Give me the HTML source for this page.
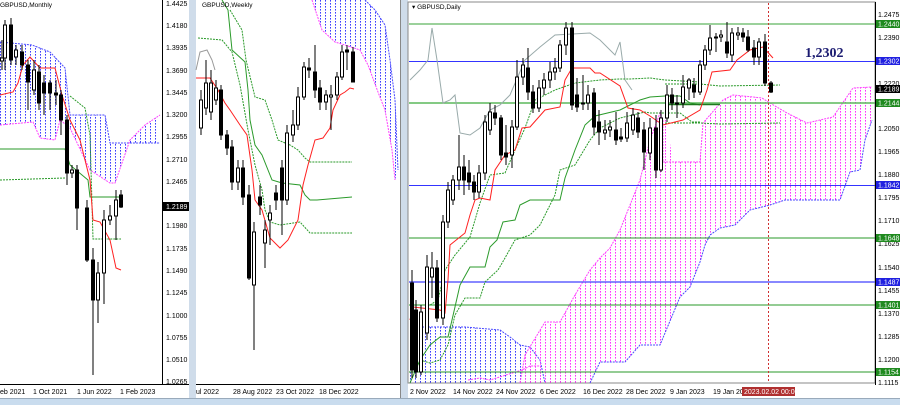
<!DOCTYPE html>
<html><head><meta charset="utf-8"><style>
html,body{margin:0;padding:0;background:#fff;width:900px;height:405px;overflow:hidden}
svg text{font-family:"Liberation Sans",sans-serif;font-size:7px;fill:#000}
</style></head><body>
<svg width="900" height="405" viewBox="0 0 900 405" xmlns="http://www.w3.org/2000/svg">
<defs>
<pattern id="pb" width="5" height="3" patternUnits="userSpaceOnUse"><rect x="0" y="0" width="1" height="1.6" fill="#3a3aff"/></pattern>
<pattern id="pp" width="5" height="3" patternUnits="userSpaceOnUse"><rect x="0" y="0" width="1" height="1.6" fill="#ff30ff"/></pattern>
</defs>
<rect width="900" height="405" fill="#fff"/>
<rect x="189" y="0" width="7" height="398" fill="#cfdcea"/>
<rect x="400" y="0" width="8" height="398" fill="#cfdcea"/>
<line x1="400.5" y1="0" x2="400.5" y2="398" stroke="#888"/>
<rect x="0" y="398" width="900" height="7" fill="#c9dcee"/>
<line x1="0" y1="398.5" x2="900" y2="398.5" stroke="#9ab"/>

<!-- MONTHLY -->
<polygon fill="url(#pb)" points="0,42 32,45 50,52 65,68 70,115 105,115 110,143 160,143 160,115 145,125 130,140 115,183 110,183 90,170 70,128 60,120 55,140 40,138 33,122 0,125"/>
<polyline fill="none" stroke="#4a4aff" stroke-dasharray="2,1" points="0,42 32,45 50,52 65,68 70,115 105,115 110,143 160,143"/>
<polyline fill="none" stroke="#ff40ff" stroke-dasharray="2,1" points="0,125 33,122 40,138 55,140 60,120 70,128 90,170 110,183 115,183 130,140 145,125 160,115"/>
<polyline fill="none" stroke="#2a9a2a" points="0,149 65,149 70,165 88,180 90,197 121,197"/>
<polyline fill="none" stroke="#2a9a2a" stroke-dasharray="2,1" points="0,180 65,178"/>
<polyline fill="none" stroke="#2a9a2a" stroke-dasharray="2,1" points="70,96 85,108 90,135 93,239 121,239"/>
<polyline fill="none" stroke="#ff2020" points="0,95 13,92 18,83 23,65 30,57 40,68 55,68 62,95 70,120 80,140 90,180 93,220 100,222 110,240 116,268 121,270"/>
<g stroke="#000" stroke-width="1">
<line x1="2" y1="40" x2="2" y2="70"/><rect x="0.5" y="58" width="3" height="3" fill="#fff"/>
<line x1="5" y1="20" x2="5" y2="70"/><rect x="3.5" y="25" width="3" height="33" fill="#fff"/>
<line x1="11" y1="18" x2="11" y2="65"/><rect x="9.5" y="25" width="3" height="35" fill="#000"/>
<line x1="16" y1="45" x2="16" y2="65"/><rect x="14.5" y="50" width="3" height="7" fill="#fff"/>
<line x1="22" y1="45" x2="22" y2="70"/><rect x="20.5" y="52" width="3" height="13" fill="#000"/>
<line x1="28" y1="60" x2="28" y2="110"/><rect x="26.5" y="65" width="3" height="17" fill="#000"/>
<line x1="34" y1="60" x2="34" y2="95"/><rect x="32.5" y="70" width="3" height="20" fill="#fff"/>
<line x1="39" y1="65" x2="39" y2="110"/><rect x="37.5" y="72" width="3" height="31" fill="#000"/>
<line x1="44" y1="75" x2="44" y2="115"/><rect x="42.5" y="83" width="3" height="10" fill="#000"/>
<line x1="50" y1="80" x2="50" y2="110"/><rect x="48.5" y="83" width="3" height="10" fill="#000"/>
<line x1="56" y1="80" x2="56" y2="105"/><rect x="54.5" y="93" width="3" height="2" fill="#000"/>
<line x1="61" y1="90" x2="61" y2="135"/><rect x="59.5" y="95" width="3" height="25" fill="#000"/>
<line x1="67" y1="115" x2="67" y2="185"/><rect x="65.5" y="120" width="3" height="53" fill="#000"/>
<line x1="72" y1="165" x2="72" y2="178"/><rect x="70.5" y="170" width="3" height="3" fill="#fff"/>
<line x1="77" y1="165" x2="77" y2="230"/><rect x="75.5" y="170" width="3" height="38" fill="#000"/>
<line x1="87" y1="200" x2="87" y2="262"/><rect x="85.5" y="208" width="3" height="52" fill="#000"/>
<line x1="93" y1="248" x2="93" y2="375"/><rect x="91.5" y="260" width="3" height="40" fill="#000"/>
<line x1="98" y1="262" x2="98" y2="323"/><rect x="96.5" y="273" width="3" height="27" fill="#fff"/>
<line x1="104" y1="210" x2="104" y2="304"/><rect x="102.5" y="220" width="3" height="53" fill="#fff"/>
<line x1="110" y1="205" x2="110" y2="225"/><rect x="108.5" y="216" width="3" height="4" fill="#fff"/>
<line x1="116" y1="190" x2="116" y2="240"/><rect x="114.5" y="200" width="3" height="16" fill="#fff"/>
<line x1="121" y1="190" x2="121" y2="208"/><rect x="119.5" y="195" width="3" height="12" fill="#000"/>
</g>
<line x1="162.5" y1="0" x2="162.5" y2="385" stroke="#000"/>
<line x1="0" y1="384.5" x2="189" y2="384.5" stroke="#000"/>
<g>
<text x="166" y="6">1.4425</text><text x="166" y="28">1.4180</text><text x="166" y="50">1.3935</text><text x="166" y="73">1.3690</text><text x="166" y="95">1.3445</text><text x="166" y="117">1.3200</text><text x="166" y="139">1.2955</text><text x="166" y="162">1.2710</text><text x="166" y="184">1.2465</text>
<text x="166" y="228">1.1980</text><text x="166" y="251">1.1735</text><text x="166" y="273">1.1490</text><text x="166" y="295">1.1245</text><text x="166" y="318">1.1000</text><text x="166" y="340">1.0755</text><text x="166" y="362">1.0510</text><text x="166" y="384">1.0265</text>
</g>
<rect x="163" y="202" width="26" height="9" fill="#000"/><text x="166" y="209" style="fill:#fff">1.2189</text>
<text x="0" y="4" style="font-size:6.5px" dy="3">GBPUSD,Monthly</text>
<text x="0" y="394">eb 2021</text><text x="33" y="394">1 Oct 2021</text><text x="77" y="394">1 Jun 2022</text><text x="120" y="394">1 Feb 2023</text>

<!-- WEEKLY -->
<polygon fill="url(#pb)" points="312,0 322,30 335,42 345,45 360,50 368,65 378,92 385,110 392,150 395,180 398,170 395,100 390,60 385,25 375,10 365,0"/>
<polyline fill="none" stroke="#ff40ff" stroke-dasharray="2,1" points="312,0 322,30 335,42 345,45 360,50 368,65 378,92 385,110 392,150 395,180"/>
<polyline fill="none" stroke="#4a4aff" stroke-dasharray="2,1" points="365,0 375,10 385,25 390,60 395,100 398,170"/>
<polyline fill="none" stroke="#999" points="196,70 200,52 207,50 212,60 215,70"/>
<polyline fill="none" stroke="#2a9a2a" points="222,0 228,10 232,50 245,62 248,90 250,120 255,145 262,155 272,180 282,183 300,185 305,195 310,200 317,200 352,197"/>
<polyline fill="none" stroke="#2a9a2a" stroke-dasharray="2,1" points="230,10 242,30 246,60 255,97 265,100 272,120 278,140 290,145 298,150 305,158 310,162 352,162"/>
<polyline fill="none" stroke="#2a9a2a" stroke-dasharray="2,1" points="198,38 222,40 232,52 240,85 248,130 255,165 262,190 265,210 270,222 280,225 300,222 310,233 352,233"/>
<polyline fill="none" stroke="#ff2020" points="196,78 210,78 218,90 225,103 230,110 240,125 247,135 252,170 255,200 262,210 270,238 280,248 288,240 298,220 303,185 308,165 315,140 323,138 330,128 333,110 340,95 345,92 350,88 354,89"/>
<g stroke="#000">
<line x1="201" y1="90" x2="201" y2="135"/><rect x="199.5" y="100" width="3" height="28" fill="#fff"/>
<line x1="206" y1="60" x2="206" y2="115"/><rect x="204.5" y="83" width="3" height="25" fill="#fff"/>
<line x1="211" y1="70" x2="211" y2="120"/><rect x="209.5" y="83" width="3" height="29" fill="#fff"/>
<line x1="216" y1="80" x2="216" y2="105"/><rect x="214.5" y="88" width="3" height="12" fill="#fff"/>
<line x1="221" y1="85" x2="221" y2="140"/><rect x="219.5" y="90" width="3" height="45" fill="#000"/>
<line x1="227" y1="130" x2="227" y2="155"/><rect x="225.5" y="135" width="3" height="13" fill="#000"/>
<line x1="232" y1="140" x2="232" y2="190"/><rect x="230.5" y="147" width="3" height="35" fill="#000"/>
<line x1="238" y1="160" x2="238" y2="190"/><rect x="236.5" y="168" width="3" height="14" fill="#fff"/>
<line x1="243" y1="160" x2="243" y2="205"/><rect x="241.5" y="168" width="3" height="29" fill="#000"/>
<line x1="249" y1="185" x2="249" y2="280"/><rect x="247.5" y="195" width="3" height="83" fill="#000"/>
<line x1="254" y1="222" x2="254" y2="350"/><rect x="252.5" y="232" width="3" height="53" fill="#fff"/>
<line x1="260" y1="185" x2="260" y2="215"/><rect x="258.5" y="197" width="3" height="8" fill="#000"/>
<line x1="265" y1="220" x2="265" y2="268"/><rect x="263.5" y="230" width="3" height="13" fill="#fff"/>
<line x1="270" y1="205" x2="270" y2="245"/><rect x="268.5" y="213" width="3" height="7" fill="#fff"/>
<line x1="276" y1="185" x2="276" y2="210"/><rect x="274.5" y="193" width="3" height="7" fill="#000"/>
<line x1="282" y1="160" x2="282" y2="235"/><rect x="280.5" y="168" width="3" height="32" fill="#000"/>
<line x1="287" y1="125" x2="287" y2="205"/><rect x="285.5" y="133" width="3" height="67" fill="#fff"/>
<line x1="293" y1="110" x2="293" y2="142"/><rect x="291.5" y="125" width="3" height="10" fill="#fff"/>
<line x1="298" y1="87" x2="298" y2="130"/><rect x="296.5" y="97" width="3" height="28" fill="#fff"/>
<line x1="304" y1="62" x2="304" y2="100"/><rect x="302.5" y="67" width="3" height="30" fill="#fff"/>
<line x1="309" y1="58" x2="309" y2="78"/><rect x="307.5" y="68" width="3" height="2" fill="#000"/>
<line x1="315" y1="45" x2="315" y2="98"/><rect x="313.5" y="72" width="3" height="18" fill="#000"/>
<line x1="320" y1="80" x2="320" y2="110"/><rect x="318.5" y="88" width="3" height="14" fill="#000"/>
<line x1="326" y1="90" x2="326" y2="110"/><rect x="324.5" y="95" width="3" height="7" fill="#fff"/>
<line x1="331" y1="85" x2="331" y2="130"/><rect x="329.5" y="95" width="3" height="2" fill="#fff"/>
<line x1="337" y1="72" x2="337" y2="100"/><rect x="335.5" y="77" width="3" height="18" fill="#fff"/>
<line x1="342" y1="45" x2="342" y2="80"/><rect x="340.5" y="52" width="3" height="25" fill="#fff"/>
<line x1="347" y1="45" x2="347" y2="70"/><rect x="345.5" y="50" width="3" height="2" fill="#000"/>
<line x1="353" y1="47" x2="353" y2="82"/><rect x="351.5" y="52" width="3" height="30" fill="#000"/>
</g>
<line x1="196" y1="384.5" x2="400" y2="384.5" stroke="#000"/>
<text x="202" y="7" style="font-size:6.5px">GBPUSD,Weekly</text>
<text x="196" y="394">ul 2022</text><text x="233" y="394">28 Aug 2022</text><text x="276" y="394">23 Oct 2022</text><text x="319" y="394">18 Dec 2022</text>

<!-- DAILY -->
<rect x="408" y="2" width="467" height="381" fill="#fff" stroke="#888"/>
<polygon fill="url(#pb)" points="410,327 465,327 500,330 510,337 520,345 530,347 540,360 545,383 410,383"/>
<polyline fill="none" stroke="#4a4aff" stroke-dasharray="2,1" points="410,327 465,327 500,330 510,337 520,345 530,347 540,360 545,383"/>
<polyline fill="none" stroke="#ff40ff" stroke-dasharray="2,1" points="468,380 480,378 490,380 522,370 530,366 540,366"/>
<polygon fill="url(#pp)" points="520,383 525,355 545,322 560,322 575,295 590,270 600,258 610,248 620,230 630,205 640,180 650,140 660,113 663,100 673,162 700,162 703,123 723,100 733,95 753,97 762,98 770,103 787,113 807,123 833,117 853,88 872,87 872,120 865,140 860,170 850,172 840,200 785,200 770,205 750,210 735,225 720,228 710,235 705,245 700,262 690,287 680,297 660,345 640,345 625,362 600,362 590,383"/>
<polyline fill="none" stroke="#ff40ff" stroke-dasharray="2,1" points="520,383 525,355 545,322 560,322 575,295 590,270 600,258 610,248 620,230 630,205 640,180 650,140 660,113 663,120 663,162 673,162 700,162 703,123 723,100 733,95 753,97 762,98 770,103 787,113 807,123 833,117 853,88 872,87"/>
<polyline fill="none" stroke="#4a4aff" stroke-dasharray="2,1" points="590,383 600,362 625,362 640,345 660,345 680,297 690,287 700,262 705,245 710,235 720,228 735,225 750,210 770,205 785,200 840,200 850,172 860,170 865,140 872,120"/>
<g stroke-width="1.5">
<line x1="409" y1="24" x2="875" y2="24" stroke="#7ac27a"/>
<line x1="409" y1="61.5" x2="875" y2="61.5" stroke="#3434ff" stroke-width="1"/>
<line x1="409" y1="103" x2="875" y2="103" stroke="#5cb85c"/>
<line x1="409" y1="185.5" x2="875" y2="185.5" stroke="#3434ff" stroke-width="1"/>
<line x1="409" y1="238" x2="875" y2="238" stroke="#2a9a2a" stroke-width="1"/>
<line x1="409" y1="282" x2="875" y2="282" stroke="#6060ff"/>
<line x1="409" y1="305" x2="875" y2="305" stroke="#2a9a2a" stroke-width="1"/>
<line x1="409" y1="372" x2="875" y2="372" stroke="#2a9a2a" stroke-width="1"/>
</g>
<polyline fill="none" stroke="#9aa" points="410,80 420,70 428,60 432,28 437,60 443,103 450,100 455,95 460,133 470,135 480,128 490,110 500,105 510,95 525,60 540,47 555,35 590,33 600,40 615,55 620,42 625,80 632,90"/>
<polyline fill="none" stroke="#2a9a2a" points="410,383 420,360 430,345 440,337 448,337 452,320 460,285 470,267 485,267 490,247 497,240 503,222 515,220 520,205 530,200 560,200 565,178 575,150 585,125 595,116 620,110 630,105 640,100 650,97 665,96 680,96 690,103 700,105"/>
<polyline fill="none" stroke="#2a9a2a" stroke-dasharray="2,1" points="420,360 430,363 440,360 448,345 455,315 465,298 480,298 485,282 498,270 505,258 515,240 530,235 540,225 555,195 560,170 575,165 590,140 600,128 620,118 645,112 650,113 680,113 692,122 700,122"/>
<polyline fill="none" stroke="#2a9a2a" stroke-dasharray="2,1" points="430,305 438,300 445,270 455,255 470,237 480,203 490,175 505,173 515,150 525,128 535,100 555,90 575,83 600,80 620,79 630,79 650,78 665,80 700,82"/>
<polyline fill="none" stroke="#2a9a2a" stroke-dasharray="2,1" points="665,123 700,123 720,124 780,123"/>
<polyline fill="none" stroke="#2a9a2a" stroke-dasharray="2,1" points="665,84 700,84 720,86 780,85"/>
<line x1="665" y1="104.5" x2="720" y2="104.5" stroke="#1d7a1d" stroke-width="1.5"/>
<polyline fill="none" stroke="#ff2020" points="410,320 413,307 440,310 445,313 448,280 450,245 465,233 470,215 475,200 480,198 490,200 495,170 505,155 515,150 522,128 530,127 545,110 560,107 565,80 572,68 590,68 595,73 600,73 620,86 628,108 640,110 650,116 663,125 683,120 700,110 707,90 712,72 730,70 737,60 750,50 763,47 773,58"/>
<g stroke="#000">
<line x1="412" y1="270" x2="412" y2="378"/><rect x="410.5" y="283" width="3" height="87" fill="#000"/>
<line x1="416" y1="300" x2="416" y2="378"/><rect x="414.5" y="310" width="3" height="62" fill="#000"/>
<line x1="421" y1="305" x2="421" y2="375"/><rect x="419.5" y="312" width="3" height="60" fill="#fff"/>
<line x1="427" y1="255" x2="427" y2="340"/><rect x="425.5" y="267" width="3" height="66" fill="#fff"/>
<line x1="432" y1="252" x2="432" y2="298"/><rect x="430.5" y="268" width="3" height="9" fill="#fff"/>
<line x1="437" y1="260" x2="437" y2="322"/><rect x="435.5" y="268" width="3" height="50" fill="#000"/>
<line x1="443" y1="215" x2="443" y2="325"/><rect x="441.5" y="222" width="3" height="96" fill="#fff"/>
<line x1="448" y1="182" x2="448" y2="228"/><rect x="446.5" y="190" width="3" height="32" fill="#fff"/>
<line x1="453" y1="175" x2="453" y2="205"/><rect x="451.5" y="180" width="3" height="20" fill="#fff"/>
<line x1="459" y1="135" x2="459" y2="190"/><rect x="457.5" y="167" width="3" height="13" fill="#fff"/>
<line x1="464" y1="155" x2="464" y2="195"/><rect x="462.5" y="167" width="3" height="13" fill="#000"/>
<line x1="469" y1="160" x2="469" y2="190"/><rect x="467.5" y="173" width="3" height="9" fill="#000"/>
<line x1="474" y1="175" x2="474" y2="200"/><rect x="472.5" y="182" width="3" height="10" fill="#000"/>
<line x1="479" y1="165" x2="479" y2="198"/><rect x="477.5" y="173" width="3" height="19" fill="#fff"/>
<line x1="485" y1="115" x2="485" y2="180"/><rect x="483.5" y="122" width="3" height="51" fill="#fff"/>
<line x1="490" y1="103" x2="490" y2="135"/><rect x="488.5" y="112" width="3" height="18" fill="#fff"/>
<line x1="495" y1="105" x2="495" y2="125"/><rect x="493.5" y="113" width="3" height="5" fill="#000"/>
<line x1="501" y1="115" x2="501" y2="160"/><rect x="499.5" y="118" width="3" height="37" fill="#000"/>
<line x1="506" y1="125" x2="506" y2="165"/><rect x="504.5" y="153" width="3" height="4" fill="#000"/>
<line x1="512" y1="120" x2="512" y2="168"/><rect x="510.5" y="127" width="3" height="28" fill="#fff"/>
<line x1="517" y1="60" x2="517" y2="130"/><rect x="515.5" y="77" width="3" height="50" fill="#fff"/>
<line x1="523" y1="58" x2="523" y2="85"/><rect x="521.5" y="65" width="3" height="12" fill="#fff"/>
<line x1="528" y1="48" x2="528" y2="100"/><rect x="526.5" y="68" width="3" height="24" fill="#000"/>
<line x1="533" y1="85" x2="533" y2="113"/><rect x="531.5" y="92" width="3" height="16" fill="#000"/>
<line x1="539" y1="80" x2="539" y2="112"/><rect x="537.5" y="88" width="3" height="20" fill="#fff"/>
<line x1="544" y1="73" x2="544" y2="95"/><rect x="542.5" y="80" width="3" height="8" fill="#fff"/>
<line x1="550" y1="62" x2="550" y2="88"/><rect x="548.5" y="72" width="3" height="8" fill="#fff"/>
<line x1="555" y1="58" x2="555" y2="80"/><rect x="553.5" y="68" width="3" height="4" fill="#fff"/>
<line x1="560" y1="40" x2="560" y2="72"/><rect x="558.5" y="45" width="3" height="23" fill="#fff"/>
<line x1="566" y1="22" x2="566" y2="55"/><rect x="564.5" y="28" width="3" height="17" fill="#fff"/>
<line x1="572" y1="22" x2="572" y2="110"/><rect x="570.5" y="28" width="3" height="77" fill="#000"/>
<line x1="577" y1="78" x2="577" y2="112"/><rect x="575.5" y="95" width="3" height="12" fill="#000"/>
<line x1="583" y1="75" x2="583" y2="110"/><rect x="581.5" y="103" width="3" height="1" fill="#000"/>
<line x1="588" y1="85" x2="588" y2="110"/><rect x="586.5" y="95" width="3" height="8" fill="#fff"/>
<line x1="594" y1="88" x2="594" y2="135"/><rect x="592.5" y="93" width="3" height="34" fill="#000"/>
<line x1="599" y1="110" x2="599" y2="145"/><rect x="597.5" y="122" width="3" height="10" fill="#000"/>
<line x1="605" y1="120" x2="605" y2="140"/><rect x="603.5" y="130" width="3" height="3" fill="#fff"/>
<line x1="610" y1="120" x2="610" y2="137"/><rect x="608.5" y="127" width="3" height="3" fill="#fff"/>
<line x1="616" y1="112" x2="616" y2="145"/><rect x="614.5" y="130" width="3" height="10" fill="#000"/>
<line x1="621" y1="128" x2="621" y2="142"/><rect x="619.5" y="137" width="3" height="2" fill="#000"/>
<line x1="627" y1="112" x2="627" y2="142"/><rect x="625.5" y="123" width="3" height="15" fill="#fff"/>
<line x1="633" y1="108" x2="633" y2="135"/><rect x="631.5" y="115" width="3" height="15" fill="#fff"/>
<line x1="638" y1="112" x2="638" y2="138"/><rect x="636.5" y="118" width="3" height="14" fill="#000"/>
<line x1="644" y1="122" x2="644" y2="170"/><rect x="642.5" y="130" width="3" height="22" fill="#000"/>
<line x1="650" y1="118" x2="650" y2="160"/><rect x="648.5" y="128" width="3" height="25" fill="#fff"/>
<line x1="656" y1="115" x2="656" y2="178"/><rect x="654.5" y="128" width="3" height="42" fill="#000"/>
<line x1="661" y1="110" x2="661" y2="172"/><rect x="659.5" y="118" width="3" height="52" fill="#fff"/>
<line x1="667" y1="85" x2="667" y2="122"/><rect x="665.5" y="95" width="3" height="23" fill="#fff"/>
<line x1="672" y1="88" x2="672" y2="110"/><rect x="670.5" y="95" width="3" height="8" fill="#000"/>
<line x1="677" y1="95" x2="677" y2="118"/><rect x="675.5" y="103" width="3" height="1" fill="#000"/>
<line x1="683" y1="75" x2="683" y2="108"/><rect x="681.5" y="87" width="3" height="16" fill="#fff"/>
<line x1="689" y1="78" x2="689" y2="100"/><rect x="687.5" y="80" width="3" height="8" fill="#fff"/>
<line x1="694" y1="78" x2="694" y2="98"/><rect x="692.5" y="85" width="3" height="7" fill="#000"/>
<line x1="700" y1="60" x2="700" y2="95"/><rect x="698.5" y="65" width="3" height="27" fill="#fff"/>
<line x1="705" y1="45" x2="705" y2="70"/><rect x="703.5" y="50" width="3" height="15" fill="#fff"/>
<line x1="710" y1="25" x2="710" y2="55"/><rect x="708.5" y="38" width="3" height="12" fill="#fff"/>
<line x1="716" y1="33" x2="716" y2="52"/><rect x="714.5" y="37" width="3" height="1" fill="#fff"/>
<line x1="721" y1="30" x2="721" y2="42"/><rect x="719.5" y="35" width="3" height="2" fill="#fff"/>
<line x1="727" y1="22" x2="727" y2="58"/><rect x="725.5" y="42" width="3" height="11" fill="#000"/>
<line x1="732" y1="28" x2="732" y2="62"/><rect x="730.5" y="33" width="3" height="22" fill="#fff"/>
<line x1="738" y1="27" x2="738" y2="40"/><rect x="736.5" y="33" width="3" height="2" fill="#fff"/>
<line x1="743" y1="28" x2="743" y2="42"/><rect x="741.5" y="33" width="3" height="4" fill="#000"/>
<line x1="748" y1="30" x2="748" y2="52"/><rect x="746.5" y="37" width="3" height="13" fill="#000"/>
<line x1="754" y1="40" x2="754" y2="65"/><rect x="752.5" y="48" width="3" height="9" fill="#000"/>
<line x1="759" y1="38" x2="759" y2="65"/><rect x="757.5" y="42" width="3" height="15" fill="#fff"/>
<line x1="765" y1="34" x2="765" y2="86"/><rect x="763.5" y="42" width="3" height="41" fill="#000"/>
<line x1="771" y1="81" x2="771" y2="93"/><rect x="769.5" y="83" width="3" height="9" fill="#000"/>
</g>
<line x1="768.5" y1="3" x2="768.5" y2="383" stroke="#d03030" stroke-dasharray="2,2"/>
<text x="805" y="57" style="font-family:'Liberation Serif',serif;font-weight:bold;font-size:14px;fill:#1a1a70">1,2302</text>
<text x="412" y="9" style="font-size:6.5px">▾ GBPUSD,Daily</text>
<line x1="875.5" y1="2" x2="875.5" y2="385" stroke="#000"/>
<g>
<text x="878" y="17">1.2475</text><text x="878" y="40">1.2390</text><text x="878" y="86">1.2220</text><text x="878" y="131">1.2050</text><text x="878" y="154">1.1965</text><text x="878" y="177">1.1880</text><text x="878" y="200">1.1795</text><text x="878" y="223">1.1710</text><text x="878" y="246">1.1625</text><text x="878" y="270">1.1540</text><text x="878" y="293">1.1455</text><text x="878" y="316">1.1370</text><text x="878" y="339">1.1285</text><text x="878" y="362">1.1200</text><text x="878" y="385">1.1115</text>
</g>
<g>
<rect x="876" y="20" width="24" height="8" fill="#1f8a1f"/><text x="878" y="26.5" style="fill:#fff">1.2440</text>
<rect x="876" y="57" width="24" height="8" fill="#2020e0"/><text x="878" y="63.5" style="fill:#fff">1.2302</text>
<rect x="876" y="85" width="24" height="8" fill="#000"/><text x="878" y="91.5" style="fill:#fff">1.2189</text>
<rect x="876" y="99" width="24" height="8" fill="#1f8a1f"/><text x="878" y="105.5" style="fill:#fff">1.2144</text>
<rect x="876" y="181" width="24" height="8" fill="#2020e0"/><text x="878" y="187.5" style="fill:#fff">1.1842</text>
<rect x="876" y="234" width="24" height="8" fill="#1f8a1f"/><text x="878" y="240.5" style="fill:#fff">1.1648</text>
<rect x="876" y="278" width="24" height="8" fill="#2020e0"/><text x="878" y="284.5" style="fill:#fff">1.1487</text>
<rect x="876" y="301" width="24" height="8" fill="#1f8a1f"/><text x="878" y="307.5" style="fill:#fff">1.1401</text>
<rect x="876" y="368" width="24" height="8" fill="#1f8a1f"/><text x="878" y="374.5" style="fill:#fff">1.1154</text>
</g>
<text x="410" y="394">2 Nov 2022</text><text x="453" y="394">14 Nov 2022</text><text x="496" y="394">24 Nov 2022</text><text x="540" y="394">6 Dec 2022</text><text x="583" y="394">16 Dec 2022</text><text x="626" y="394">28 Dec 2022</text><text x="670" y="394">9 Jan 2023</text><text x="713" y="394">19 Jan 20</text>
<rect x="742" y="387" width="53" height="9" fill="#b03030"/><text x="744" y="394" style="fill:#fff">2023.02.02 00:00</text>
</svg>
</body></html>
